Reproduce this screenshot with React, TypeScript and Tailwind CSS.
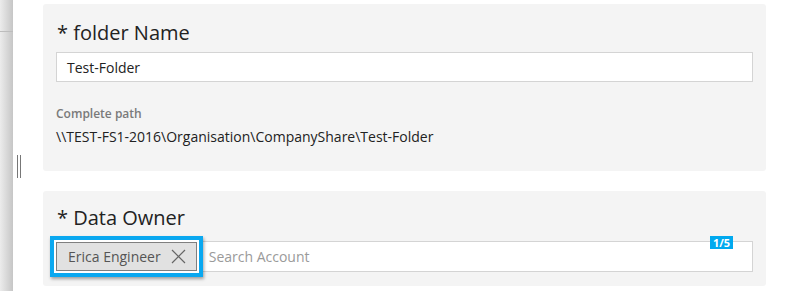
import React from 'react';

const font = { fontFamily: '"Open Sans", "Noto Sans", sans-serif' };

function Card({ children, className }: { children: React.ReactNode; className?: string }) {
    return <div className={`rounded-[3px] bg-[#f4f4f4] pl-[13px] pr-[13px] ${className ?? ''}`}>{children}</div>;
}

export default function App() {
    return (
        <div className="flex h-[291px] w-[795px] overflow-hidden bg-white text-[#222]" style={font}>
            {/* side panel edge */}
            <div className="relative w-[13px] shrink-0 bg-gradient-to-r from-[#ececec] to-[#c6c6c6]">
                <div className="mt-[31px] h-px bg-[#bdbdbd]" />
            </div>

            {/* resize handle */}
            <div className="w-[30px] shrink-0 pt-[155px] pl-[4px]">
                <div className="flex h-[23px] gap-[2px]">
                    <div className="w-px bg-[#777]" />
                    <div className="w-px bg-[#777]" />
                </div>
            </div>

            <div className="flex w-[723px] shrink-0 flex-col gap-[20px] pt-[4px]">
                <Card className="h-[167px] pt-[15px]">
                    <h2 className="h-[33px] pl-px text-[20px] leading-[28px] font-normal">* folder Name</h2>
                    <div className="flex h-[30px] items-center border border-[#d4d4d4] bg-white pl-[10px] text-[14px]">
                        Test-Folder
                    </div>
                    <div className="mt-[24px] text-[12px] leading-[16px] font-semibold text-[#7a7a7a]">Complete path</div>
                    <div className="mt-[5px] text-[14px] leading-[20px]">
                        {'\\\\TEST-FS1-2016\\Organisation\\CompanyShare\\Test-Folder'}
                    </div>
                </Card>

                <Card className="h-[95px] pt-[13px]">
                    <h2 className="h-[37px] pl-px text-[20px] leading-[28px] font-normal">* Data Owner</h2>
                    <div className="relative flex h-[31px] items-center border border-[#d4d4d4] bg-white">
                        <span className="absolute -top-[6px] right-[19px] bg-[#00a9ef] px-[3px] text-[11px] leading-[13px] font-bold text-white">
                            1/5
                        </span>
                        <div className="-ml-[7px] border-4 border-[#0aa8f0] bg-white p-[2px] shadow-[1px_2px_3px_rgba(0,0,0,0.35)]">
                            <div className="flex h-[29px] items-center gap-[10px] border border-[#7f7f7f] bg-[#e1e1e1] pr-[10px] pl-[11px] text-[14px] text-[#555]">
                                Erica Engineer
                                <svg width="15" height="15" viewBox="0 0 15 15" fill="none" stroke="#666" strokeWidth="1.2">
                                    <path d="M1 1 L14 14 M14 1 L1 14" />
                                </svg>
                            </div>
                        </div>
                        <span className="ml-[6px] text-[14px] text-[#9a9a9a]">Search Account</span>
                    </div>
                </Card>
            </div>
        </div>
    );
}
